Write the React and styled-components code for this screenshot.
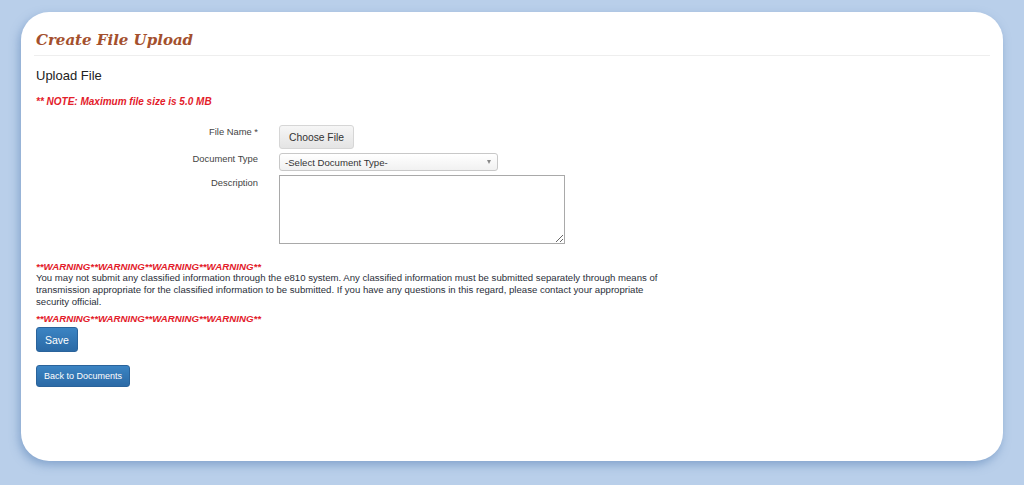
import styled, { createGlobalStyle } from 'styled-components';

const GlobalStyle = createGlobalStyle`
    html, body {
        margin: 0;
        padding: 0;
        background: #b9cfea;
        font-family: "Liberation Sans", Arial, sans-serif;
    }
`;

const SPage = styled.div`
    width: 1024px;
    height: 485px;
    box-sizing: border-box;
    padding: 12px 21px 24px;
    overflow: hidden;
`;

const SCard = styled.div`
    height: 100%;
    box-sizing: border-box;
    padding: 0 13px;
    background: #fff;
    border-radius: 28px;
    box-shadow: -2px 4px 10px rgba(90, 130, 180, 0.55);
`;

const STitle = styled.h1`
    margin: 0;
    padding: 19px 2px 6px;
    font-family: "DejaVu Serif", Georgia, serif;
    font-style: italic;
    font-weight: bold;
    font-size: 15px;
    color: #a4502d;
    border-bottom: 1px solid #eee;
`;

const SBody = styled.div`
    padding: 12px 2px 0;
`;

const SHeading = styled.h2`
    margin: 0;
    font-size: 13px;
    font-weight: normal;
    color: #222;
`;

const SAlert = styled.div`
    margin-top: ${p => p.mt || 0}px;
    font-size: ${p => p.fs || 10}px;
    font-weight: bold;
    font-style: italic;
    color: #e3202a;
`;

const SForm = styled.div`
    display: flex;
    flex-direction: column;
    gap: 4px;
    margin-top: 18px;
`;

const SRow = styled.div`
    display: grid;
    grid-template-columns: 222px auto;
    column-gap: 21px;
    align-items: start;
`;

const SLabel = styled.label`
    text-align: right;
    font-size: 9.4px;
    color: #444;
    padding-top: ${p => p.pt || 0}px;
`;

const SFileButton = styled.button`
    width: 75px;
    height: 24px;
    padding: 0;
    font-family: inherit;
    font-size: 10.3px;
    color: #333;
    background: linear-gradient(#f6f6f6, #e4e4e4);
    border: 1px solid #d6d6d6;
    border-radius: 3px;
    justify-self: start;
`;

const SSelect = styled.div`
    width: 219px;
    height: 18px;
    box-sizing: border-box;
    display: flex;
    align-items: center;
    justify-content: space-between;
    padding: 0 6px 0 5px;
    font-size: 9.6px;
    color: #333;
    background: linear-gradient(#fff, #f1f1f1);
    border: 1px solid #c8c8c8;
    border-radius: 3px;
`;

const SCaret = styled.span`
    width: 0;
    height: 0;
    border-left: 2.5px solid transparent;
    border-right: 2.5px solid transparent;
    border-top: 4px solid #888;
`;

const STextArea = styled.textarea`
    width: 286px;
    height: 69px;
    box-sizing: border-box;
    margin: 0;
    border: 1px solid #a9a9a9;
    resize: both;
    justify-self: start;
`;

const SWarning = styled.div`
    margin-top: 17px;
    width: 630px;
`;

const SText = styled.p`
    margin: 0;
    font-size: 9.6px;
    line-height: 12px;
    color: #2b2f3a;
`;

const SButton = styled.button`
    display: block;
    height: ${p => p.h}px;
    padding: 0 ${p => p.px}px;
    margin-top: ${p => p.mt}px;
    font-family: inherit;
    font-size: ${p => p.fs}px;
    color: #fff;
    background: linear-gradient(#3b84c3, #2b6aa6);
    border: 1px solid #2a639b;
    border-radius: 3px;
`;

export default function App() {
    return (
        <>
            <GlobalStyle />
            <SPage>
                <SCard>
                    <STitle>Create File Upload</STitle>
                    <SBody>
                        <SHeading>Upload File</SHeading>
                        <SAlert mt={13}>** NOTE: Maximum file size is 5.0 MB</SAlert>
                        <SForm>
                            <SRow>
                                <SLabel pt={1}>File Name *</SLabel>
                                <SFileButton>Choose File</SFileButton>
                            </SRow>
                            <SRow>
                                <SLabel>Document Type</SLabel>
                                <SSelect>
                                    <span>-Select Document Type-</span>
                                    <SCaret />
                                </SSelect>
                            </SRow>
                            <SRow>
                                <SLabel pt={2}>Description</SLabel>
                                <STextArea />
                            </SRow>
                        </SForm>
                        <SWarning>
                            <SAlert fs={9.7}>**WARNING**WARNING**WARNING**WARNING**</SAlert>
                            <SText>
                                You may not submit any classified information through the e810 system. Any classified information must be submitted separately through means of transmission appropriate for the classified information to be submitted. If you have any questions in this regard, please contact your appropriate security official.
                            </SText>
                            <SAlert fs={9.7} mt={5}>**WARNING**WARNING**WARNING**WARNING**</SAlert>
                        </SWarning>
                        <SButton h={25} px={8} mt={3} fs={10.5}>Save</SButton>
                        <SButton h={22} px={7} mt={13} fs={9}>Back to Documents</SButton>
                    </SBody>
                </SCard>
            </SPage>
        </>
    );
}
